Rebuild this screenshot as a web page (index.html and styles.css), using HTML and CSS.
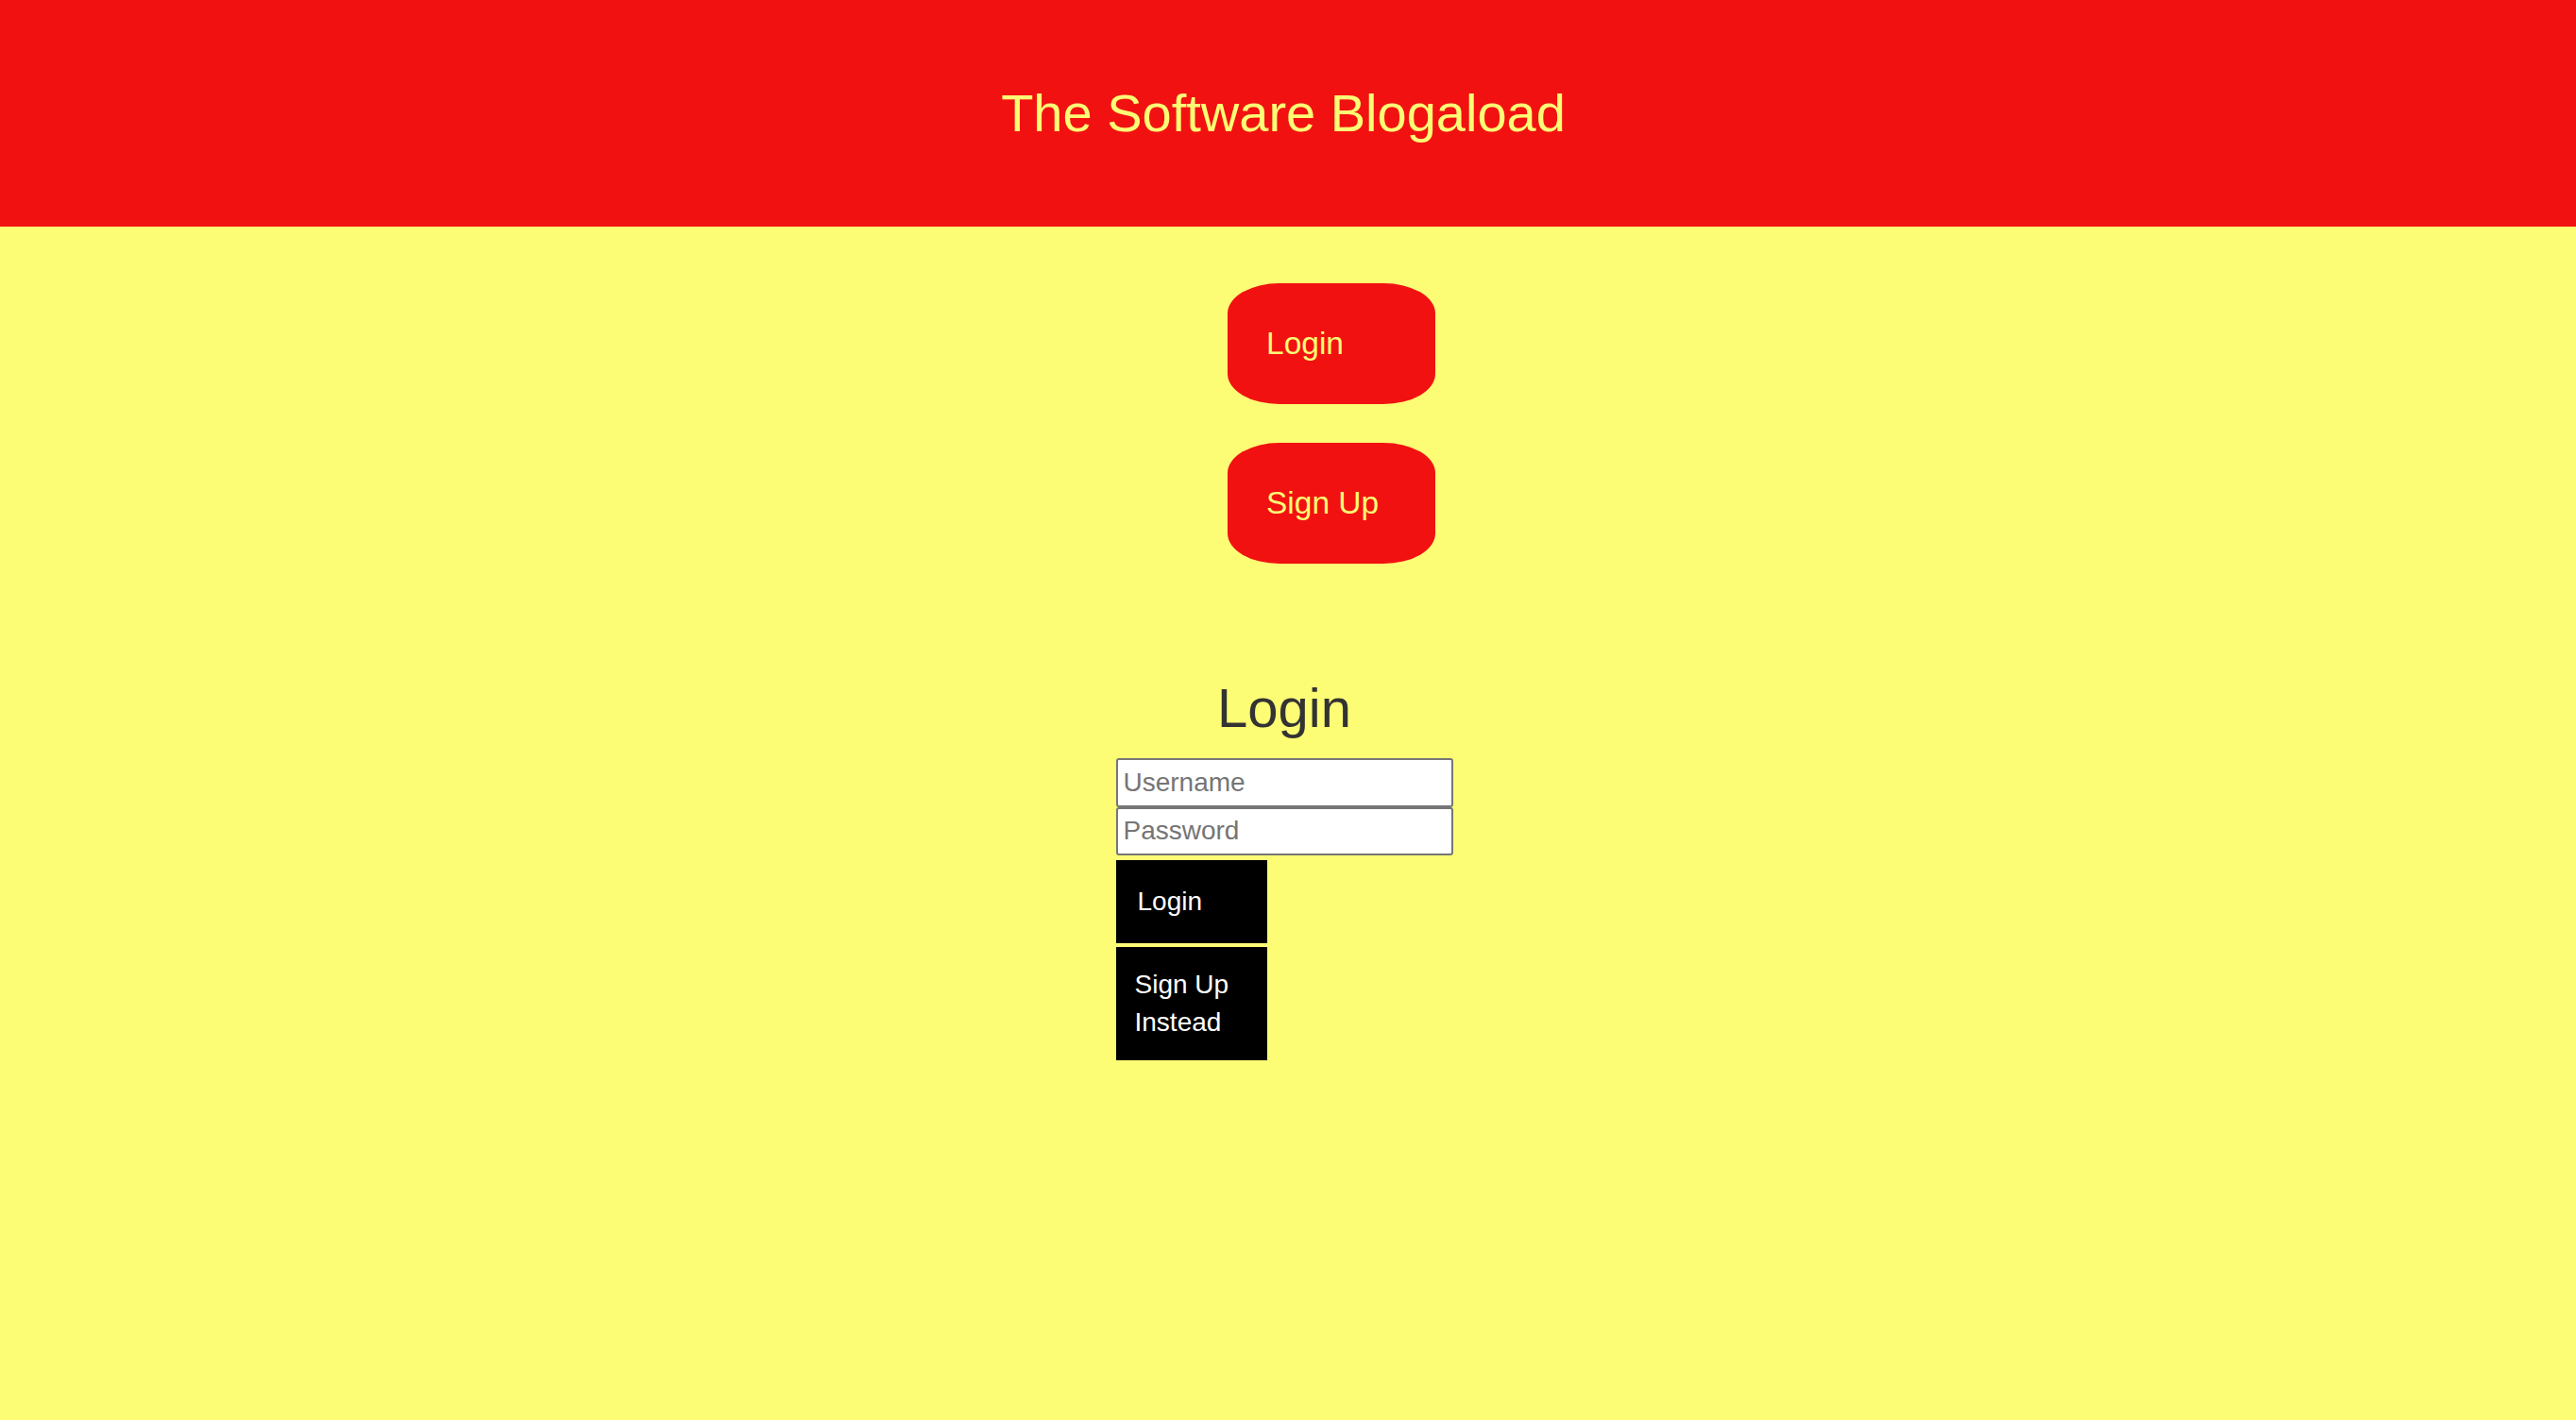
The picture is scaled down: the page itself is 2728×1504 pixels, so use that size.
FILE: index.html
```html
<!DOCTYPE html>
<html lang="en">
<head>
<meta charset="utf-8">
<title>The Software Blogaload</title>
<link rel="stylesheet" href="styles.css">
</head>
<body>
<header class="site-header">
  <h1 class="site-title">The Software Blogaload</h1>
</header>
<main class="page">
  <nav class="nav">
    <a class="nav-btn" href="#">Login</a>
    <a class="nav-btn" href="#">Sign Up</a>
  </nav>
  <section class="login">
    <h2 class="login-title">Login</h2>
    <form class="login-form">
      <input class="field" type="text" placeholder="Username">
      <input class="field" type="password" placeholder="Password">
      <button class="black-btn black-btn-login" type="button">Login</button>
      <button class="black-btn black-btn-signup" type="button">Sign Up Instead</button>
    </form>
  </section>
</main>
</body>
</html>
```
FILE: styles.css
```css
html, body {
  margin: 0;
  padding: 0;
}
body {
  background: #fcfc75;
  font-family: "Liberation Sans", Arial, sans-serif;
  min-height: 1504px;
}
.site-header {
  height: 240px;
  box-sizing: border-box;
  background: #f21111;
  padding: 88px 10px 0 0;
  display: flex;
  justify-content: center;
}
.site-title {
  margin: 0;
  font-size: 56px;
  line-height: 64px;
  font-weight: normal;
  color: #fcfc75;
}
.page {
  padding-right: 8px;
}
.nav {
  display: flex;
  flex-direction: column;
  align-items: center;
  gap: 41px;
  padding-top: 60px;
}
.nav-btn {
  margin-left: 100px;
  width: 220px;
  height: 128px;
  box-sizing: border-box;
  padding-left: 41px;
  display: flex;
  align-items: center;
  background: #f21111;
  color: #fcfc75;
  text-decoration: none;
  font-size: 33.5px;
  border-radius: 25%;
}
.login {
  display: flex;
  flex-direction: column;
  align-items: center;
  padding-top: 120px;
}
.login-title {
  margin: 0 0 20px;
  font-size: 58px;
  line-height: 66px;
  font-weight: normal;
  color: #333333;
}
.login-form {
  width: 357px;
  display: flex;
  flex-direction: column;
  align-items: flex-start;
}
.field {
  width: 357px;
  height: 51.5px;
  box-sizing: border-box;
  margin: 0;
  padding: 0 6px;
  border: 2px solid #767676;
  border-radius: 3px;
  background: #ffffff;
  font-family: "Liberation Sans", Arial, sans-serif;
  font-size: 28px;
  color: #000;
}
.field::placeholder {
  color: #757575;
}
.black-btn {
  width: 160px;
  box-sizing: border-box;
  border: none;
  border-radius: 0;
  background: #000000;
  color: #ffffff;
  font-family: "Liberation Sans", Arial, sans-serif;
  font-size: 28px;
  line-height: 40px;
  text-align: left;
  margin: 0;
}
.black-btn-login {
  margin-top: 5px;
  height: 88px;
  padding: 24px 10px 24px 23px;
}
.black-btn-signup {
  margin-top: 4px;
  height: 120px;
  padding: 20px 20px 20px 20px;
}
```
